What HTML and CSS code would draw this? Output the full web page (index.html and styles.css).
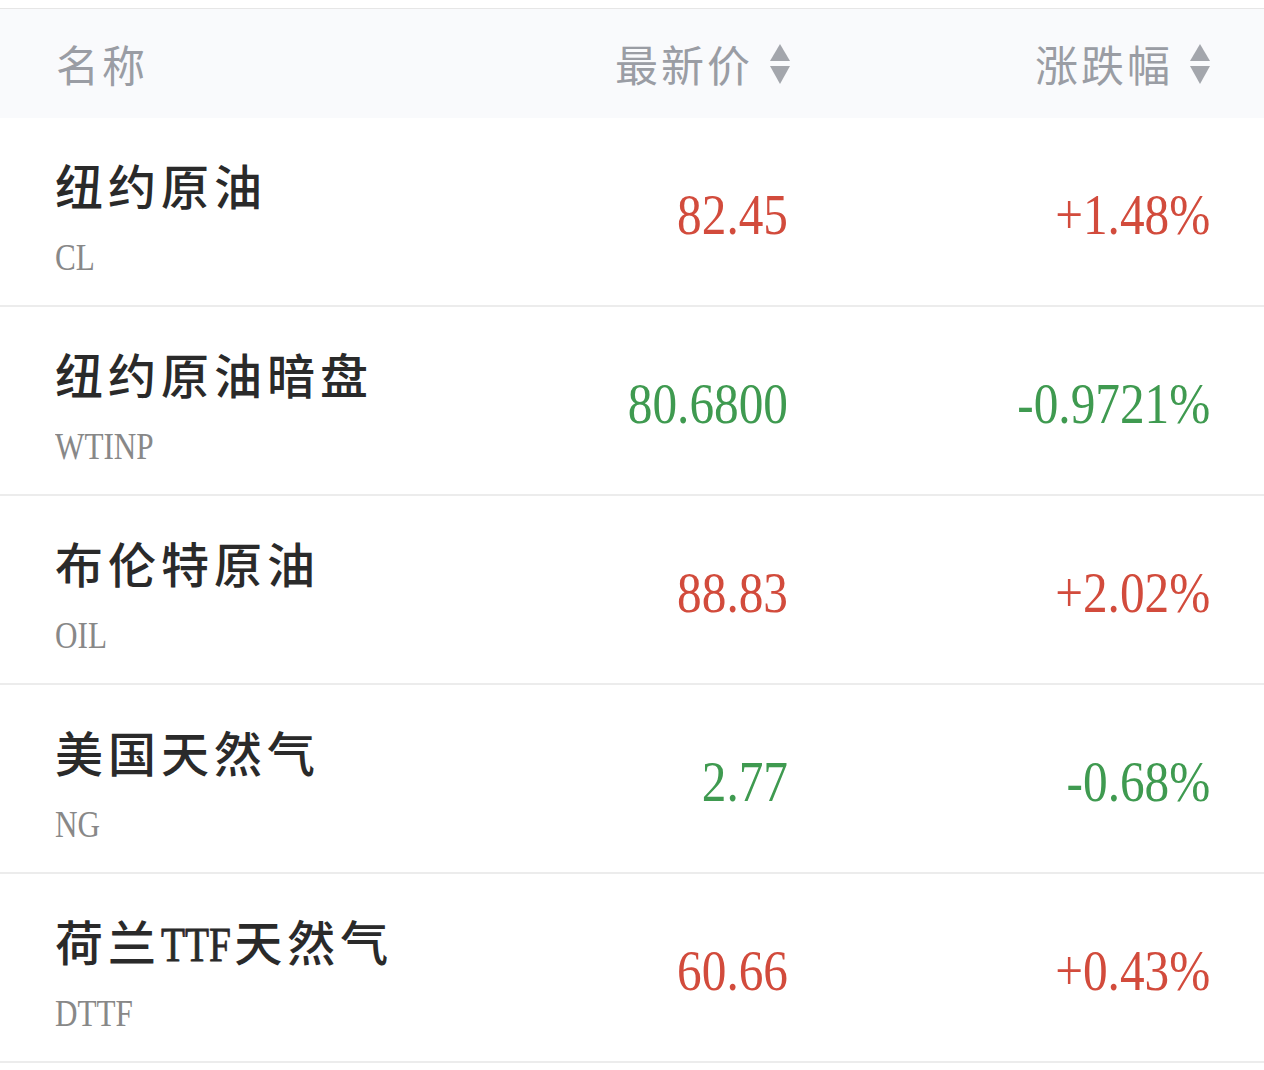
FILE: index.html
```html
<!DOCTYPE html>
<html lang="zh-CN">
<head>
    <meta charset="UTF-8">
    <meta name="viewport" content="width=device-width, initial-scale=1.0">
    <title>能源行情</title>
    <link rel="stylesheet" href="styles.css">
</head>
<body>
    <div class="quote-table">
        <!-- Header -->
        <div class="quote-row quote-head">
            <div class="col-name"><span class="head-text">名称</span></div>
            <div class="col-num col-price">
                <span class="head-text">最新价</span>
                <svg class="sort-icon" viewBox="0 0 20 40" width="20" height="40">
                    <path d="M10 0 L20 17 L0 17 Z" />
                    <path d="M0 22 L20 22 L10 40 Z" />
                </svg>
            </div>
            <div class="col-num">
                <span class="head-text">涨跌幅</span>
                <svg class="sort-icon" viewBox="0 0 20 40" width="20" height="40">
                    <path d="M10 0 L20 17 L0 17 Z" />
                    <path d="M0 22 L20 22 L10 40 Z" />
                </svg>
            </div>
        </div>

        <div class="quote-row">
            <div class="col-name">
                <div class="item-name">纽约原油</div>
                <div class="item-code"><span>CL</span></div>
            </div>
            <div class="col-num col-price up"><span class="num">82.45</span></div>
            <div class="col-num up"><span class="num">+1.48%</span></div>
        </div>

        <div class="quote-row">
            <div class="col-name">
                <div class="item-name">纽约原油暗盘</div>
                <div class="item-code"><span>WTINP</span></div>
            </div>
            <div class="col-num col-price down"><span class="num">80.6800</span></div>
            <div class="col-num down"><span class="num">-0.9721%</span></div>
        </div>

        <div class="quote-row">
            <div class="col-name">
                <div class="item-name">布伦特原油</div>
                <div class="item-code"><span>OIL</span></div>
            </div>
            <div class="col-num col-price up"><span class="num">88.83</span></div>
            <div class="col-num up"><span class="num">+2.02%</span></div>
        </div>

        <div class="quote-row">
            <div class="col-name">
                <div class="item-name">美国天然气</div>
                <div class="item-code"><span>NG</span></div>
            </div>
            <div class="col-num col-price down"><span class="num">2.77</span></div>
            <div class="col-num down"><span class="num">-0.68%</span></div>
        </div>

        <div class="quote-row">
            <div class="col-name">
                <div class="item-name">荷兰<span class="latin">TTF</span>天然气</div>
                <div class="item-code"><span>DTTF</span></div>
            </div>
            <div class="col-num col-price up"><span class="num">60.66</span></div>
            <div class="col-num up"><span class="num">+0.43%</span></div>
        </div>
    </div>
</body>
</html>
```

FILE: styles.css
```css
* {
    margin: 0;
    padding: 0;
    box-sizing: border-box;
}
body {
    background-color: #fff;
    font-family: "Liberation Serif", "Noto Sans CJK SC", serif;
    color: #2a2a2a;
    padding-top: 8px;
}
.quote-table {
    border-top: 1px solid #e6e6e6;
}
.quote-row {
    display: grid;
    grid-template-columns: 1fr 300px 420px;
    padding: 0 54px 0 55px;
    height: 189px;
    border-bottom: 2px solid #ececec;
}
.quote-head {
    height: 109px;
    background-color: #f9fafc;
    border-bottom: none;
    align-items: center;
}
.head-text {
    font-family: "Noto Sans CJK SC", sans-serif;
    font-size: 43px;
    letter-spacing: 3px;
    color: #9a9da4;
    line-height: 1;
}
.quote-head .col-name {
    padding-left: 1px;
}
.quote-head .col-num {
    display: flex;
    align-items: center;
    justify-content: flex-end;
    gap: 17px;
}
.sort-icon {
    fill: #a3a6ac;
    flex-shrink: 0;
}
.col-name {
    display: flex;
    flex-direction: column;
}
.quote-row:not(.quote-head) .col-name {
    padding-top: 41px;
}
.item-name {
    font-size: 48px;
    font-weight: 500;
    letter-spacing: 5px;
    line-height: 60px;
    white-space: nowrap;
}
.item-name .latin {
    display: inline-block;
    letter-spacing: 0;
    -webkit-text-stroke: 0.8px #2a2a2a;
    transform: scaleX(0.82);
    transform-origin: left center;
    margin-right: -12px;
}
.item-code {
    margin-top: 14px;
    line-height: 48px;
    font-size: 38px;
    color: #888;
}
.item-code span {
    display: inline-block;
    transform: scaleX(0.82);
    transform-origin: left center;
}
.col-num {
    display: flex;
    align-items: center;
    justify-content: flex-end;
}
.quote-row:not(.quote-head) .col-num {
    padding-top: 6px;
}
.quote-row:not(.quote-head) .col-price {
    padding-right: 2px;
}
.num {
    display: inline-block;
    font-size: 56px;
    line-height: 1;
    transform: scaleX(0.88);
    transform-origin: right center;
}
.up {
    color: #d24b3c;
}
.down {
    color: #3f9a50;
}
```
